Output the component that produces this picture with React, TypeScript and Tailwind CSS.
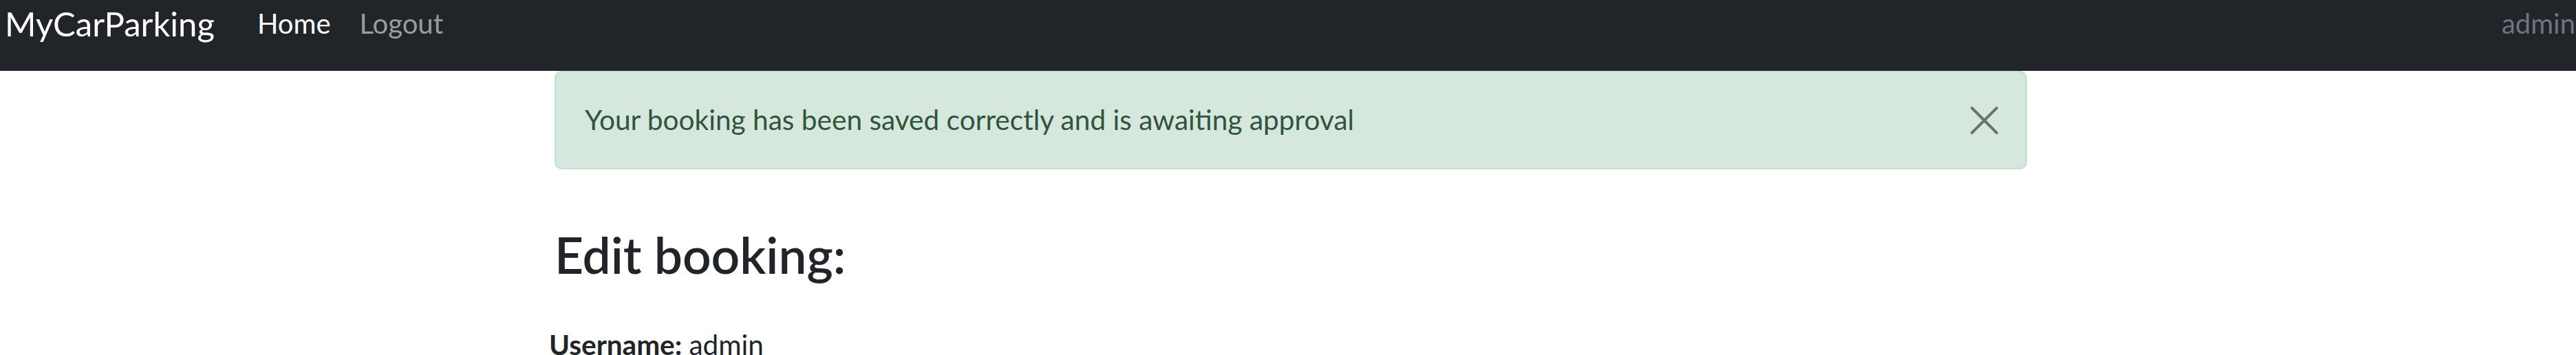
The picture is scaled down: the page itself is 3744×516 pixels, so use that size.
export default function App() {
  return (
    <div className="w-[3744px] h-[516px] overflow-hidden bg-white font-['Lato',sans-serif]">
      <nav className="h-[103px] bg-[#212529]">
        <div className="h-[68px] flex items-center pl-[7px]">
          <span className="text-[49px] leading-none text-white whitespace-nowrap">MyCarParking</span>
          <a className="ml-[62px] text-[40px] leading-none text-white whitespace-nowrap">Home</a>
          <a className="ml-[42px] text-[40px] leading-none text-[#9b9c9e] whitespace-nowrap">Logout</a>
          <span className="ml-auto mr-[1px] text-[40px] leading-none text-[#6c757d] whitespace-nowrap">admin</span>
        </div>
      </nav>
      <main className="ml-[806px] w-[2140px]">
        <div className="h-[143px] flex items-center justify-between border-2 border-[#c3dfd0] rounded-[10px] bg-[#d6e7dd] pl-[42px] pr-[40px]">
          <span className="text-[40.6px] leading-none text-[#2f553b] whitespace-nowrap">
            Your booking has been saved correctly and is awaiting approval
          </span>
          <button className="w-[40px] h-[40px] flex items-center justify-center" aria-label="Close">
            <svg width="40" height="40" viewBox="0 0 40 40">
              <path d="M2 2 L38 38 M38 2 L2 38" stroke="#6b736f" strokeWidth="4" strokeLinecap="round" />
            </svg>
          </button>
        </div>
        <h2 className="mt-[88px] text-[73px] leading-none font-semibold text-[#212529] whitespace-nowrap">
          Edit booking:
        </h2>
        <p className="mt-[74px] ml-[-8px] text-[40.5px] leading-none text-[#212529] whitespace-nowrap">
          <span className="font-bold">Username:</span> admin
        </p>
      </main>
    </div>
  );
}
